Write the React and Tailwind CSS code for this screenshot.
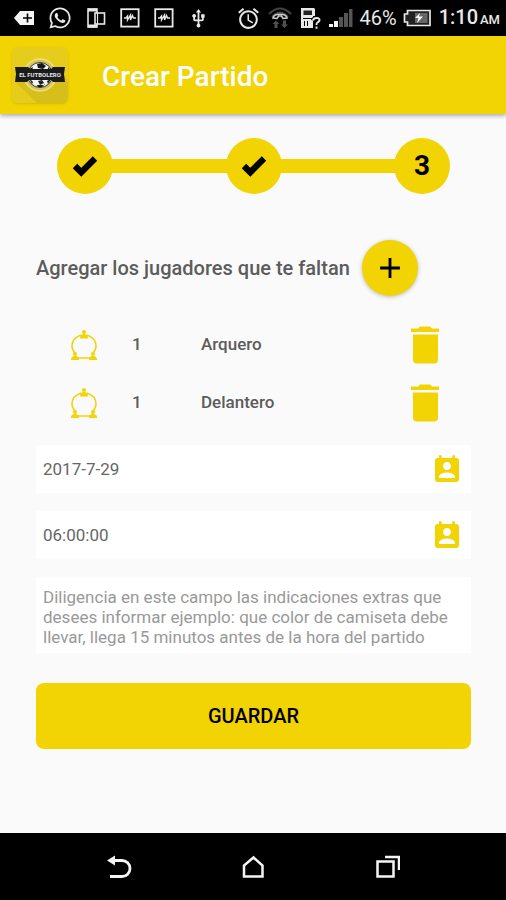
import { useState } from "react";
import { Check } from "lucide-react";
import { FaWhatsapp } from "react-icons/fa";
import { MdPermContactCalendar, MdAdd, MdUsb, MdAlarm } from "react-icons/md";

const initialPlayers = [
  { id: 1, amount: 1, position: "Arquero" },
  { id: 2, amount: 1, position: "Delantero" },
];

const CodeBoxIcon = () => (
  <svg viewBox="0 0 20 20" className="size-5" fill="none" stroke="#e8e8e8">
    <rect x="1.2" y="1.2" width="17.4" height="17.4" strokeWidth="1.8" />
    <path d="M4 10h2l1.500-2v4l3-5v5l2-4.500 1 2.500H16" strokeWidth="1.400" />
  </svg>
);

const StatusBar = () => (
  <div className="flex h-9 items-center justify-between bg-black pl-3.5 pr-1.5 text-[#e8e8e8]">
    <div className="flex items-center gap-3.5">
      <svg viewBox="0 0 20 16" className="h-4 w-5">
        <path d="M0 8 6 1h14v14H6z" fill="#f5f5f5" />
        <path d="M13.500 3.500v9M9 8h9" stroke="#000" strokeWidth="1.600" />
      </svg>
      <FaWhatsapp size={24} />
      <svg viewBox="0 0 20 22" className="h-[22px] w-5" fill="none" stroke="#e8e8e8">
        <rect x="2" y="2" width="9" height="18" strokeWidth="1.600" />
        <path d="M2 3h9M2 19h9" strokeWidth="3" />
        <rect x="9" y="6" width="9.500" height="11" fill="#000" strokeWidth="1.600" />
        <path d="M11.500 6v11" strokeWidth="1.200" />
      </svg>
      <CodeBoxIcon />
      <CodeBoxIcon />
      <MdUsb size={21} />
    </div>
    <div className="flex items-center gap-1.5">
      <MdAlarm size={25} />
      <svg viewBox="0 0 26 24" className="h-6 w-[26px]" fill="none">
        <path d="M2 8Q13-3 24 8M5 11Q13 2 21 11" stroke="#444" strokeWidth="2" />
        <path d="M6 12c1-5 13-5 14 0l-4 .5-1.500-2.500h-3L10 12.500z" stroke="#c8c8c8" strokeWidth="1.600" />
        <path d="m5.500 18 3.500-3.500 3.500 3.500h-2v4h-3v-4zM14 18.500h2v-4h3v4h2L17.500 22z" fill="#505050" />
      </svg>
      <svg viewBox="0 0 22 24" className="h-6 w-[22px]" fill="none">
        <path d="M2 2h13l1 1v7h-2v12H2z" fill="#e8e8e8" />
        <path d="M4.500 4.500h8.500v4.500H4.500z" fill="#222" />
        <path d="M4 12.500h9M5.500 15v5M8.500 15v5" stroke="#000" />
        <path d="M14 14.500q.5-2.500 3.500-2.500 3.500 0 3 2.500-.5 1-2 2-1 .5-1 2.500M17.500 20.500v2.300" stroke="#000" strokeWidth="4" />
        <path d="M14 14.500q.5-2.500 3.500-2.500 3.500 0 3 2.500-.5 1-2 2-1 .5-1 2.500M17.500 20.500v2.300" stroke="#e8e8e8" strokeWidth="1.900" />
      </svg>
      <svg viewBox="0 0 24 20" className="ml-0.5 h-5 w-6">
        <path d="M0 16h4v3H0zM5 13h4v6H5z" fill="#f5f5f5" />
        <path d="M10 9h4v10h-4zM15 5h4v14h-4zM20 1h3.500v18H20z" fill="#555" />
      </svg>
      <span className="text-[20px] leading-6">46%</span>
      <svg viewBox="0 0 28 18" className="h-[18px] w-7">
        <path d="M4.500 1.500H27v15H4.500V13H1.500V5h3z" fill="#222" stroke="#e8e8e8" strokeWidth="1.700" />
        <path d="M12 4h12.500v10H12z" fill="#666" />
        <path d="m17 4-5 5h3.500l-1.500 5 6-6.500h-4z" fill="#fff" />
      </svg>
      <span className="pl-0.5 text-[20px] font-medium leading-6">
        1:10<span className="pl-0.5 text-[13px]">AM</span>
      </span>
    </div>
  </div>
);

const AppLogo = () => (
  <svg viewBox="0 0 56 56" className="size-14 rounded-md shadow-sm">
    <rect width="56" height="56" fill="#e7cd1b" />
    <path d="M4 36 25 56h31V34L41 19z" fill="#d6bf1a" />
    <circle cx="28" cy="28" r="16" fill="#d7c553" stroke="#efdf86" strokeWidth="1.500" />
    <circle cx="28" cy="28" r="12.500" fill="#f4f4f4" stroke="#333" />
    <path d="m25 17 5-1 4 3-3 3-5-1zM17 22l4-2-1 4-3 3zM36 20l4 4v4l-4-2zM24 37l5-2 4 2-3 3h-4zM17 31l4 4-1 2zM39 32l-3 5-1-3z" fill="#191919" />
    <path d="M3 20h13l2 2h21l2-2h12l-1 7 1 8H41l-2-2H17l-2 2H3l1-8z" fill="#1b1b1b" />
    <path d="M22 33h12l-2 5h-8z" fill="#f4f4f4" />
    <path d="m26 34 4-1 2 3-4 2z" fill="#222" />
    <text x="28" y="30" textAnchor="middle" fontSize="6" fontWeight="700" fill="#e4e4e4">EL FUTBOLERO</text>
  </svg>
);

const Step = ({ done, number }) => (
  <li className="flex size-14 items-center justify-center rounded-full bg-[#f2d303] text-[28px] font-bold text-black">
    {done ? <Check size={30} strokeWidth={5} strokeLinecap="butt" strokeLinejoin="miter" aria-label="Completado" /> : number}
  </li>
);

const StepLine = () => <li aria-hidden="true" className="-mx-1 h-3.5 flex-1 bg-[#f2d303]" />;

const PlayersIcon = () => (
  <svg viewBox="0 0 28 32" className="h-8 w-7 text-[#f2d303]" fill="none" stroke="currentColor" strokeWidth="1.500">
    <path d="M11 6Q2 9 2 17q0 4 3 7M17 6q9 3 9 11 0 4-3 7M8 29h12" />
    <g fill="currentColor" stroke="none">
      <circle cx="14" cy="3" r="2" />
      <path d="M10 9.500q0-4.500 4-4.500t4 4.500z" />
      <circle cx="5" cy="25" r="2" />
      <path d="M1 31q0-4 4-4t4 4z" />
      <circle cx="23" cy="25" r="2" />
      <path d="M19 31q0-4 4-4t4 4z" />
    </g>
  </svg>
);

const TrashIcon = () => (
  <svg viewBox="0 0 28 38" className="h-[38px] w-7" fill="currentColor">
    <path d="M0 2.500h7L9 .5h10l2 2h7V6H0zM2 8.500h25v25q0 4-4 4H6q-4 0-4-4z" />
  </svg>
);

const PlayerRow = ({ player, onRemove }) => (
  <li className="flex h-[58px] items-center pl-[34px] pr-8 text-[17px] font-medium text-[#5c5c5c]">
    <PlayersIcon />
    <span className="w-[103px] pl-[34px]">{player.amount}</span>
    <span className="flex-1">{player.position}</span>
    <button type="button" onClick={onRemove} aria-label={`Eliminar ${player.position}`} className="text-[#f2d303]">
      <TrashIcon />
    </button>
  </li>
);

const PickerField = ({ label, value, onChange }) => (
  <div className="flex h-12 items-center bg-white pl-[7px] pr-2 pt-0.5">
    <input
      type="text"
      aria-label={label}
      value={value}
      onChange={(e) => onChange(e.target.value)}
      className="min-w-0 flex-1 bg-transparent text-[17px] text-[#666] outline-none"
    />
    <MdPermContactCalendar size={32} className="text-[#f2d303]" />
  </div>
);

const NavBar = () => (
  <nav className="flex h-[67px] items-center justify-between bg-black px-[106px] text-[#f5f5f5]">
    <button type="button" aria-label="Atrás">
      <svg viewBox="0 0 26 26" className="size-[26px]" fill="none" stroke="currentColor" strokeWidth="2.800">
        <path d="M7 6.500h9a7.500 7.500 0 0 1 0 16H4" />
        <path d="m1 6.500 8-5v10z" fill="currentColor" stroke="none" />
      </svg>
    </button>
    <button type="button" aria-label="Inicio">
      <svg viewBox="0 0 26 26" className="size-[26px]" fill="none" stroke="currentColor" strokeWidth="2.500">
        <path d="M4 22.500V11.500L13.500 3.500l9 8v11z" />
      </svg>
    </button>
    <button type="button" aria-label="Recientes">
      <svg viewBox="0 0 26 26" className="size-[26px]" fill="none" stroke="currentColor" strokeWidth="2.500">
        <path d="M3.500 7.500h16v15h-16zM11 3h14v13" />
      </svg>
    </button>
  </nav>
);

export default function App() {
  const [players, setPlayers] = useState(initialPlayers);
  const [date, setDate] = useState("2017-7-29");
  const [time, setTime] = useState("06:00:00");

  const addPlayer = () => setPlayers([...players, { id: Date.now(), amount: 1, position: "Defensa" }]);
  const removePlayer = (id) => setPlayers(players.filter((p) => p.id !== id));

  return (
    <div className="flex min-h-screen flex-col bg-[#fafafa] font-[Roboto,sans-serif]">
      <StatusBar />
      <header className="flex h-[78px] items-center gap-[34px] bg-[#f2d303] px-3 shadow-[0_2px_4px_rgba(0,0,0,0.3)]">
        <AppLogo />
        <h1 className="pt-1 text-[28px] font-medium text-white">Crear Partido</h1>
      </header>

      <main className="flex-1 pl-9 pr-[35px] pt-6">
        <ol className="flex items-center px-[21px]">
          <Step done />
          <StepLine />
          <Step done />
          <StepLine />
          <Step number={3} />
        </ol>

        <div className="mt-[46px] flex items-center gap-3">
          <h2 className="text-[20px] font-medium text-[#5c5c5c]">Agregar los jugadores que te faltan</h2>
          <button
            type="button"
            onClick={addPlayer}
            aria-label="Agregar jugador"
            className="flex size-14 items-center justify-center rounded-full bg-[#f2d303] text-black shadow-[0_1px_4px_rgba(0,0,0,0.25)]"
          >
            <MdAdd size={34} />
          </button>
        </div>

        <ul className="mt-5">
          {players.map((player) => (
            <PlayerRow key={player.id} player={player} onRemove={() => removePlayer(player.id)} />
          ))}
        </ul>

        <form className="mt-[13px] flex flex-col gap-[18px]" onSubmit={(e) => e.preventDefault()}>
          <PickerField label="Fecha" value={date} onChange={setDate} />
          <PickerField label="Hora" value={time} onChange={setTime} />
          <textarea
            rows={3}
            aria-label="Indicaciones"
            placeholder="Diligencia en este campo las indicaciones extras que desees informar ejemplo: que color de camiseta debe llevar, llega 15 minutos antes de la hora del partido"
            className="block resize-none bg-white px-[7px] pb-1.5 pt-2.5 text-[17px] leading-5 outline-none placeholder:text-[#999]"
          />
          <button type="submit" className="mt-3 h-[66px] rounded-lg bg-[#f2d303] text-[20px] font-medium text-black">
            GUARDAR
          </button>
        </form>
      </main>

      <NavBar />
    </div>
  );
}
